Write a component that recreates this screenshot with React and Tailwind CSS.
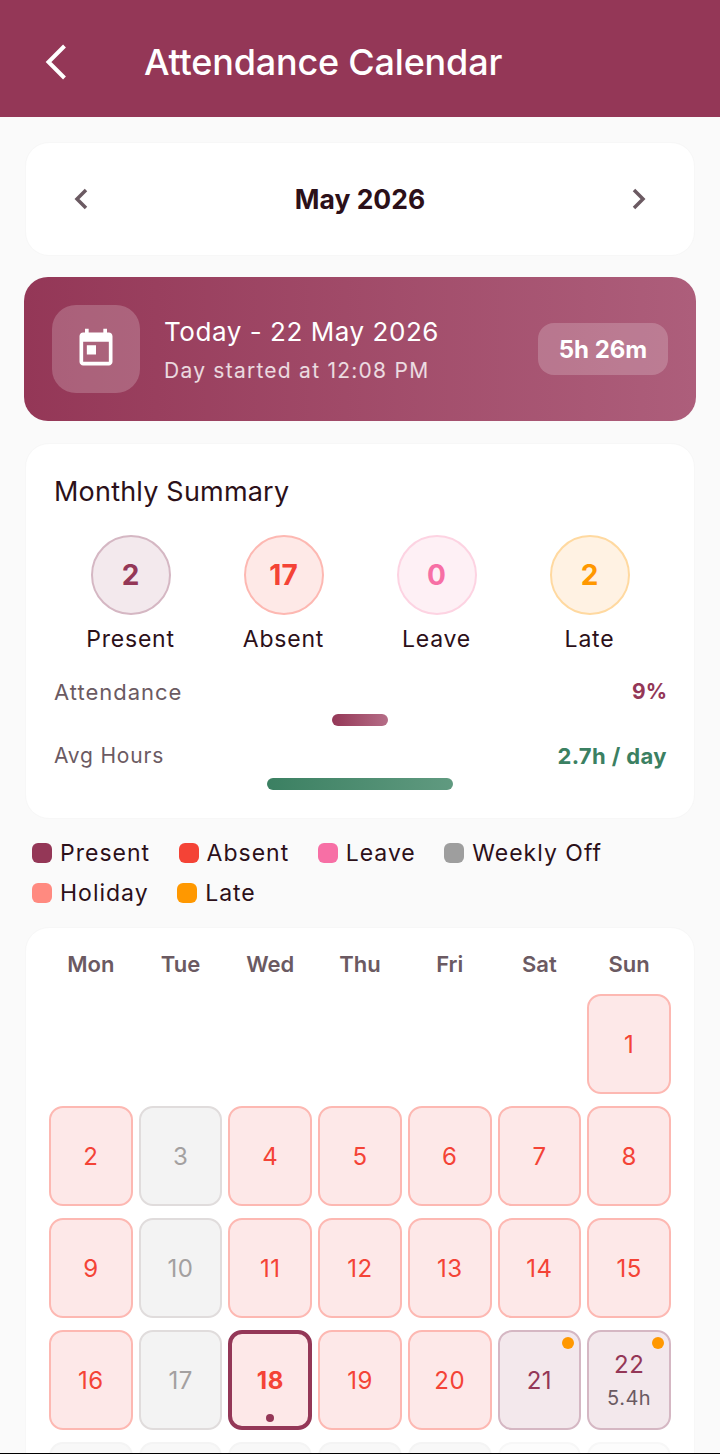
import React from 'react';

const FONT = 'font-["Inter","Noto_Sans",sans-serif]';

const SUMMARY = [
  { label: 'Present', value: '2', box: 'bg-[#f3e9ed] border-[#d5b7c3]', text: 'text-[#943757]' },
  { label: 'Absent', value: '17', box: 'bg-[#fee9e7] border-[#fdb8b2]', text: 'text-[#f44336]' },
  { label: 'Leave', value: '0', box: 'bg-[#fef0f5] border-[#fdd3e2]', text: 'text-[#f76fa5]' },
  { label: 'Late', value: '2', box: 'bg-[#fff2e3] border-[#ffd9a0]', text: 'text-[#ff9800]' },
];

const LEGEND_ROWS = [
  [
    { label: 'Present', color: 'bg-[#943757]' },
    { label: 'Absent', color: 'bg-[#f44336]' },
    { label: 'Leave', color: 'bg-[#f76fa5]' },
    { label: 'Weekly Off', color: 'bg-[#9e9e9e]' },
  ],
  [
    { label: 'Holiday', color: 'bg-[#ff8a80]' },
    { label: 'Late', color: 'bg-[#ff9800]' },
  ],
];

const DAYS = ['Mon', 'Tue', 'Wed', 'Thu', 'Fri', 'Sat', 'Sun'];

const ABSENT = 'bg-[#fde8e8] border-[#fdb8b2] text-[#f44336]';
const OFF = 'bg-[#f3f3f3] border-[#e0dcdc] text-[#a3a0a0]';
const PRESENT = 'bg-[#f3e8ec] border-[#d5b7c3] text-[#943757]';
const PAST = 'bg-[#f8f8f8] border-[#f4f4f4]';
const FUTURE = 'bg-[#fcfcfc] border-[#f7f7f7]';

const WEEKS = [
  [null, null, null, null, null, null, { d: 1, s: ABSENT }],
  [2, 3, 4, 5, 6, 7, 8].map(d => ({ d, s: d === 3 ? OFF : ABSENT })),
  [9, 10, 11, 12, 13, 14, 15].map(d => ({ d, s: d === 10 ? OFF : ABSENT })),
  [
    { d: 16, s: ABSENT },
    { d: 17, s: OFF },
    { d: 18, s: ABSENT, selected: true },
    { d: 19, s: ABSENT },
    { d: 20, s: ABSENT },
    { d: 21, s: PRESENT, late: true },
    { d: 22, s: PRESENT, late: true, hours: '5.4h' },
  ],
  // only the top edge of this row is on screen
  [PAST, PAST, PAST, PAST, PAST, FUTURE, FUTURE].map(s => ({ s })),
];

function DayCell({ day }) {
  if (!day) return <div className="h-[100px]"></div>;
  return (
    <div className={`relative h-[100px] rounded-[14px] flex flex-col items-center justify-center ${day.s} ${day.selected ? 'border-[4px] !border-[#943757]' : 'border-2'}`}>
      {day.d && <span className={`text-[24px] leading-[30px] tracking-[0.5px] ${day.selected ? 'font-bold' : 'font-normal'} ${day.hours ? '' : 'mt-[1px]'}`}>{day.d}</span>}
      {day.hours && <span className="mt-[5px] text-[20px] leading-[26px] tracking-[0.5px] text-[#6b5a62]">{day.hours}</span>}
      {day.late && <span className="absolute top-[5px] right-[5px] w-3 h-3 rounded-full bg-[#ff9800]"></span>}
      {day.selected && <span className="absolute bottom-[4px] w-2 h-2 rounded-full bg-[#943757]"></span>}
    </div>
  );
}

export default function App() {
  return (
    <div className={`${FONT} w-[720px] h-[1454px] overflow-hidden border-b border-black bg-[#fafafa] text-[#2c1019]`}>
      {/* Header */}
      <div className="h-[117px] bg-[#943757] flex items-center pl-[44px] pt-[6px]">
        <svg className="w-[24px] h-[36px]" viewBox="0 0 24 36" fill="none" stroke="white" strokeWidth="4">
          <path d="M20.5 2 L4.5 18 L20.5 34" />
        </svg>
        <h1 className="ml-[76px] text-[36px] font-medium tracking-[-0.2px] text-white">Attendance Calendar</h1>
      </div>

      <div className="px-6 pt-[25px] flex flex-col">
        {/* Month switch */}
        <div className="mx-[1px] h-[114px] rounded-[24px] bg-white border border-[#f7f7f7] flex items-center justify-between px-[47px]">
          <svg className="w-4 h-6" viewBox="0 0 16 24" fill="none" stroke="#6b5a62" strokeWidth="3.5">
            <path d="M13 3 L4 12 L13 21" />
          </svg>
          <span className="mt-[2px] text-[26.5px] font-bold">May 2026</span>
          <svg className="w-4 h-6" viewBox="0 0 16 24" fill="none" stroke="#6b5a62" strokeWidth="3.5">
            <path d="M3 3 L12 12 L3 21" />
          </svg>
        </div>

        {/* Today */}
        <div className="mt-[21px] h-[144px] rounded-[24px] bg-gradient-to-r from-[#943757] to-[#ad5e7b] flex items-center pl-[28px] pr-[28px]">
          <div className="w-[88px] h-[88px] rounded-[24px] bg-white/20 flex items-center justify-center">
            <svg className="w-11 h-11" viewBox="0 0 24 24" fill="white">
              <path d="M19 3h-1V1h-2v2H8V1H6v2H5c-1.11 0-2 .9-2 2v14c0 1.1.89 2 2 2h14c1.1 0 2-.9 2-2V5c0-1.1-.9-2-2-2zm0 16H5V8h14v11zM7 10h5v5H7z" />
            </svg>
          </div>
          <div className="ml-6 flex-1">
            <div className="text-[26px] leading-[36px] text-white tracking-[0.55px]">Today - 22 May 2026</div>
            <div className="mt-[7px] text-[21px] leading-[28px] text-white/80 tracking-[1.25px]">Day started at 12:08 PM</div>
          </div>
          <div className="w-[130px] h-[52px] pt-[1px] rounded-[16px] bg-white/20 flex items-center justify-center text-[24px] font-bold text-white">5h 26m</div>
        </div>

        {/* Monthly Summary */}
        <div className="mx-[1px] mt-[22px] h-[376px] rounded-[24px] bg-white border border-[#f7f7f7] pl-[28px] pr-[27px] pt-[30px]">
          <h2 className="text-[27px] leading-[36px] font-normal tracking-[0.2px]">Monthly Summary</h2>
          <div className="mt-[25px] grid grid-cols-4 gap-0 w-[612px]">
            {SUMMARY.map(s => (
              <div key={s.label} className="flex flex-col items-center">
                <div className={`w-[80px] h-[80px] rounded-full border-2 flex items-center justify-center text-[28px] font-bold ${s.box} ${s.text}`}>{s.value}</div>
                <span className="mt-[7px] text-[23px] leading-[34px] tracking-[0.8px]">{s.label}</span>
              </div>
            ))}
          </div>
          <div className="mt-[20px] flex justify-between items-center h-[32px] text-[#6b5a62]">
            <span className="text-[22px] tracking-[1px]">Attendance</span>
            <span className="text-[21px] font-bold text-[#943757]">9%</span>
          </div>
          <div className="mt-[6px] pr-[1px] flex justify-center">
            <div className="w-[56px] h-3 rounded-full bg-gradient-to-r from-[#943757] to-[#b56d87]"></div>
          </div>
          <div className="mt-[14px] flex justify-between items-center h-[32px] text-[#6b5a62]">
            <span className="text-[21px] tracking-[0.8px]">Avg Hours</span>
            <span className="text-[22px] font-bold tracking-[0.4px] text-[#3b8062]">2.7h / day</span>
          </div>
          <div className="mt-[6px] pr-[1px] flex justify-center">
            <div className="w-[186px] h-3 rounded-full bg-gradient-to-r from-[#3b8062] to-[#609a80]"></div>
          </div>
        </div>

        {/* Legend */}
        <div className="mt-[14px] pl-[8px] flex flex-col">
          {LEGEND_ROWS.map((row, i) => (
            <div key={i} className="h-[40px] flex items-center gap-[28.5px]">
              {row.map(item => (
                <div key={item.label} className="flex items-center gap-[8px]">
                  <span className={`w-5 h-5 rounded-[6px] ${item.color}`}></span>
                  <span className="text-[23px] tracking-[1px]">{item.label}</span>
                </div>
              ))}
            </div>
          ))}
        </div>

        {/* Calendar */}
        <div className="mx-[1px] mt-[14px] rounded-[24px] bg-white border border-[#f7f7f7] px-[23px] pb-10">
          <div className="grid grid-cols-7 gap-[6px] pt-[20px] h-[66px]">
            {DAYS.map(d => (
              <div key={d} className="text-center text-[22px] leading-[32px] font-semibold text-[#6b5a62]">{d}</div>
            ))}
          </div>
          <div className="grid grid-cols-7 gap-x-[6px] gap-y-3">
            {WEEKS.flat().map((day, i) => (
              <DayCell key={i} day={day} />
            ))}
          </div>
        </div>
      </div>
    </div>
  );
}
